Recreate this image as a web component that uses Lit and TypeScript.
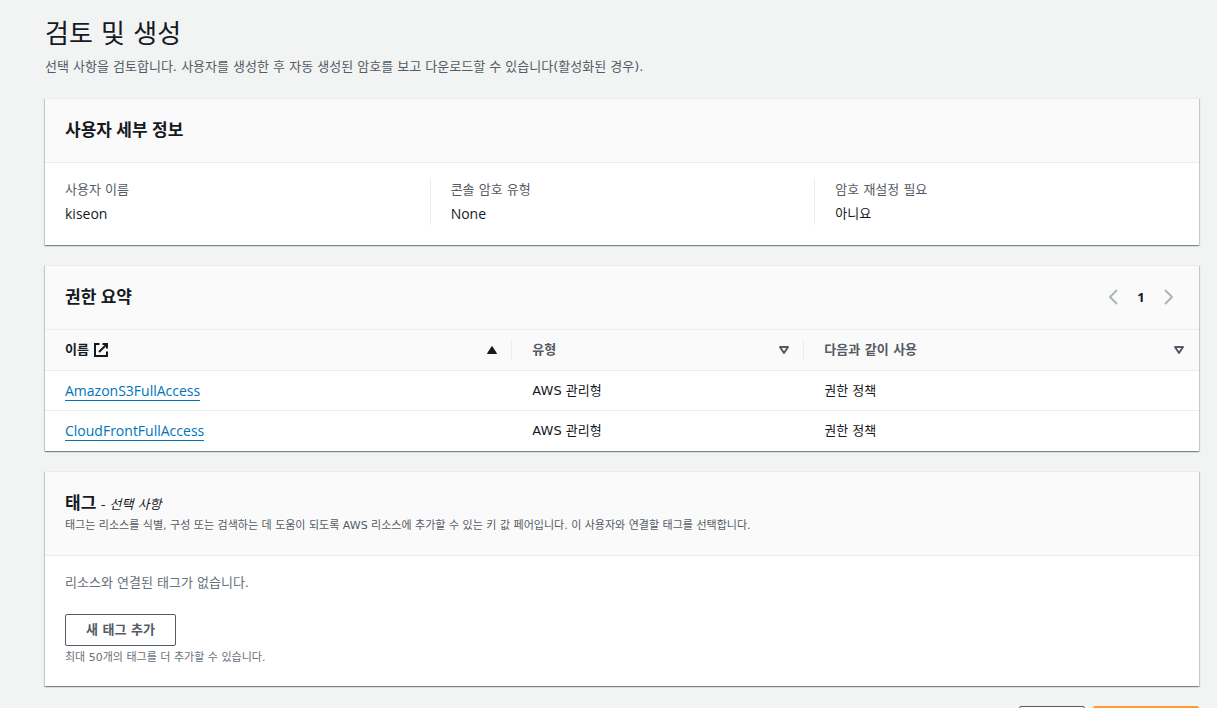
import { LitElement, html, css, svg } from "lit";
import { customElement } from "lit/decorators.js";

interface Policy {
  name: string;
  type: string;
  usedAs: string;
}

const details = [
  { label: "사용자 이름", value: "kiseon", latin: true },
  { label: "콘솔 암호 유형", value: "None", latin: true },
  { label: "암호 재설정 필요", value: "아니요", latin: false },
];

const policies: Policy[] = [
  { name: "AmazonS3FullAccess", type: "AWS 관리형", usedAs: "권한 정책" },
  { name: "CloudFrontFullAccess", type: "AWS 관리형", usedAs: "권한 정책" },
];

const icon = (content: unknown) => html`
  <svg class="icon" viewBox="0 0 16 16" aria-hidden="true">${content}</svg>
`;

const externalIcon = icon(svg`
  <path class="line square" d="M9.5 2H14v4.5M6 10l7.5-7.5" />
  <path class="line square" d="M14 9.5V14H2V2h4.5" />
`);
const previousIcon = icon(svg`<path class="line" d="M12 1 5 8l7 7" />`);
const nextIcon = icon(svg`<path class="line" d="m4 1 7 7-7 7" />`);
const sortedIcon = icon(svg`<path class="solid" d="M8 4.5 12.5 11.5h-9z" />`);
const sortableIcon = icon(svg`<path class="line" d="M4 5h8L8 11z" />`);

@customElement("app-root")
export class AppRoot extends LitElement {
  static styles = css`
    :host {
      display: block;
      box-sizing: border-box;
      min-height: 100vh;
      padding: 16px 18px 20px 45px;
      background: #f2f3f3;
      color: #16191f;
      font-family: "DejaVu Sans", "Noto Sans CJK KR", sans-serif;
      font-size: 13px;
      line-height: 22px;
    }
    * {
      box-sizing: border-box;
    }
    h1,
    h2,
    p,
    dl,
    dd {
      margin: 0;
    }
    button {
      font: inherit;
      color: inherit;
      cursor: pointer;
    }
    h1 {
      font-size: 26px;
      line-height: 36px;
      font-weight: 400;
    }
    .intro {
      margin-top: 4px;
      color: #545b64;
    }
    .card {
      margin-top: 20px;
      border-top: 1px solid #eaeded;
      background: #fff;
      box-shadow:
        0 1px 1px 0 rgba(0, 28, 36, 0.3),
        1px 1px 1px 0 rgba(0, 28, 36, 0.15),
        -1px 1px 1px 0 rgba(0, 28, 36, 0.15);
    }
    .card-header {
      display: flex;
      align-items: flex-start;
      justify-content: space-between;
      min-height: 64px;
      padding: 19px 16px 17px 20px;
      border-bottom: 1px solid #eaeded;
      background: #fafafa;
    }
    h2 {
      font-family: "Noto Sans", "Noto Sans CJK KR", sans-serif;
      font-size: 17px;
      line-height: 23px;
      font-weight: 700;
    }
    .optional {
      font-family: "DejaVu Sans", "Noto Sans CJK KR", sans-serif;
      font-size: 13px;
      line-height: 1;
      font-weight: 400;
      font-style: italic;
    }
    .hint {
      font-size: 11px;
      line-height: 24px;
      color: #545b64;
    }
    .details {
      display: grid;
      grid-template-columns: repeat(3, 1fr);
      padding: 16px 0 20px;
    }
    .detail {
      padding: 0 20px;
    }
    .detail + .detail {
      border-left: 1px solid #eaeded;
    }
    dt {
      margin-bottom: 2px;
      color: #545b64;
    }
    .latin {
      font-family: "Open Sans", sans-serif;
      font-size: 14px;
    }
    .icon {
      display: block;
      width: 16px;
      height: 16px;
    }
    .line {
      fill: none;
      stroke: currentColor;
      stroke-width: 2;
      stroke-linejoin: round;
    }
    .square {
      stroke-linejoin: miter;
    }
    .solid {
      fill: currentColor;
      stroke: currentColor;
      stroke-linejoin: round;
    }
    .pages {
      display: grid;
      grid-template-columns: repeat(3, 28px);
      align-items: center;
      justify-items: center;
      height: 23px;
    }
    .page {
      padding: 0;
      border: 0;
      background: none;
      font-family: "Noto Sans", sans-serif;
      font-weight: 700;
    }
    .page:disabled {
      color: #aab7b8;
      cursor: default;
    }
    table {
      width: 100%;
      table-layout: fixed;
      border-collapse: separate;
      border-spacing: 0;
    }
    .col-name {
      width: 40.5%;
    }
    .col-type {
      width: 25.3%;
    }
    th {
      padding: 9px 0;
      border-bottom: 1px solid #eaeded;
      background: #fafafa;
      text-align: left;
      color: #545b64;
    }
    .sort {
      display: flex;
      align-items: center;
      gap: 4px;
      width: 100%;
      height: 22px;
      padding: 0 11px 0 20px;
      border: 0;
      border-right: 1px solid #eaeded;
      background: none;
      font-weight: 700;
    }
    th:last-child .sort {
      border-right-color: transparent;
    }
    .sort > .icon:last-child {
      margin-left: auto;
    }
    .sorted {
      color: #16191f;
    }
    td {
      height: 40px;
      padding: 0 20px;
      border-bottom: 1px solid #eaeded;
    }
    tr:last-child td {
      border-bottom: 0;
    }
    .link {
      display: inline-block;
      line-height: 18px;
      border-bottom: 1px solid #0073bb;
      color: #0073bb;
      text-decoration: none;
      vertical-align: middle;
    }
    .tags {
      padding: 16px 20px 18px;
    }
    .empty {
      margin-bottom: 20px;
      color: #687078;
    }
    .note {
      margin-top: 2px;
      font-size: 11px;
      line-height: 20px;
      color: #687078;
    }
    .button {
      display: block;
      height: 32px;
      padding: 0 20px;
      border: 1px solid #545b64;
      border-radius: 2px;
      background: #fff;
      color: #545b64;
      font-weight: 700;
    }
    .primary {
      border-color: #ff9933;
      background: #ff9933;
      color: #16191f;
    }
    .actions {
      display: flex;
      justify-content: flex-end;
      gap: 8px;
      margin-top: 20px;
    }
  `;

  render() {
    return html`
      <header>
        <h1>검토 및 생성</h1>
        <p class="intro">
          선택 사항을 검토합니다. 사용자를 생성한 후 자동 생성된 암호를 보고 다운로드할 수 있습니다(활성화된 경우).
        </p>
      </header>

      <section class="card">
        <div class="card-header"><h2>사용자 세부 정보</h2></div>
        <dl class="details">
          ${details.map(
            (d) => html`
              <div class="detail">
                <dt>${d.label}</dt>
                <dd class=${d.latin ? "latin" : ""}>${d.value}</dd>
              </div>
            `
          )}
        </dl>
      </section>

      <section class="card">
        <div class="card-header">
          <h2>권한 요약</h2>
          <nav class="pages" aria-label="페이지">
            <button class="page" disabled aria-label="이전 페이지">${previousIcon}</button>
            <button class="page" aria-current="page">1</button>
            <button class="page" disabled aria-label="다음 페이지">${nextIcon}</button>
          </nav>
        </div>
        <table>
          <colgroup>
            <col class="col-name" />
            <col class="col-type" />
            <col />
          </colgroup>
          <thead>
            <tr>
              <th scope="col" aria-sort="ascending">
                <button class="sort sorted"><span>이름</span>${externalIcon}${sortedIcon}</button>
              </th>
              <th scope="col"><button class="sort"><span>유형</span>${sortableIcon}</button></th>
              <th scope="col"><button class="sort"><span>다음과 같이 사용</span>${sortableIcon}</button></th>
            </tr>
          </thead>
          <tbody>
            ${policies.map(
              (p) => html`
                <tr>
                  <td><a class="link latin" href="#${p.name}">${p.name}</a></td>
                  <td>${p.type}</td>
                  <td>${p.usedAs}</td>
                </tr>
              `
            )}
          </tbody>
        </table>
      </section>

      <section class="card">
        <div class="card-header">
          <div>
            <h2>태그 <span class="optional">- 선택 사항</span></h2>
            <p class="hint">
              태그는 리소스를 식별, 구성 또는 검색하는 데 도움이 되도록 AWS 리소스에 추가할 수 있는 키 값 페어입니다. 이 사용자와 연결할 태그를 선택합니다.
            </p>
          </div>
        </div>
        <div class="tags">
          <p class="empty">리소스와 연결된 태그가 없습니다.</p>
          <button class="button">새 태그 추가</button>
          <p class="note">최대 50개의 태그를 더 추가할 수 있습니다.</p>
        </div>
      </section>

      <footer class="actions">
        <button class="button">취소</button>
        <button class="button primary">사용자 생성</button>
      </footer>
    `;
  }
}
